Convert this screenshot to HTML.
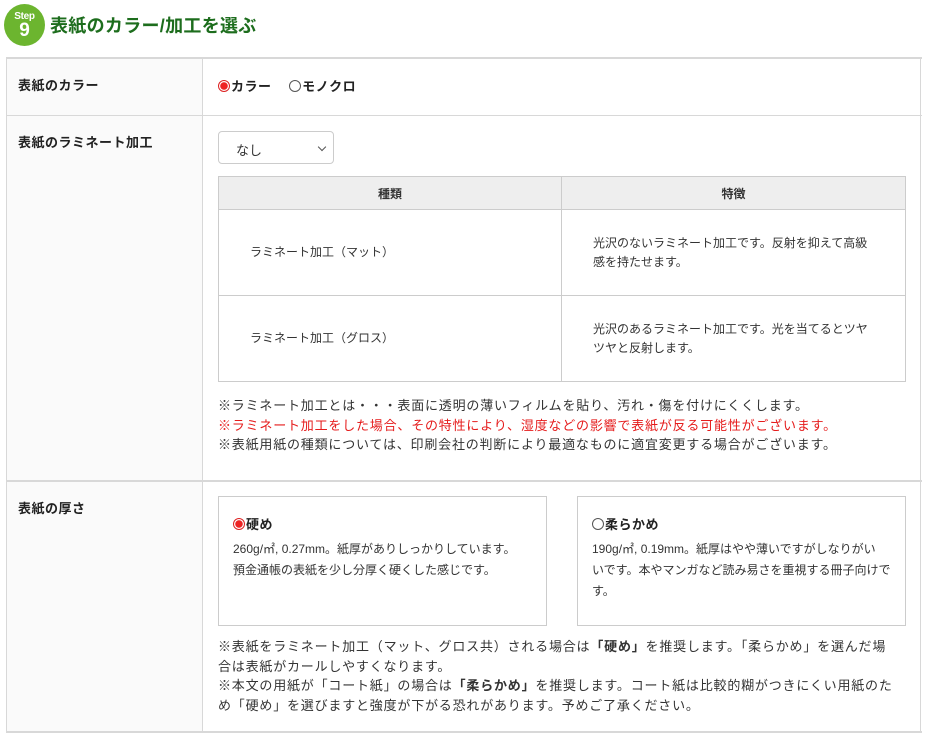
<!DOCTYPE html>
<html><head><meta charset="utf-8">
<style>
*{margin:0;padding:0;box-sizing:border-box}
body{width:926px;height:737px;background:#fff;font-family:"Liberation Sans","Noto Sans CJK JP",sans-serif;color:#333;position:relative;overflow:hidden}
.abs{position:absolute}
.step{left:4px;top:4px;width:41px;height:42px;border-radius:50%;background:#6cb52f;color:#fff;text-align:center}
.step .s{font-size:10px;font-weight:bold;line-height:10px;margin-top:8px;letter-spacing:-.3px}
.step .n{font-size:19px;font-weight:bold;line-height:18px}
h1{position:absolute;left:50px;top:12px;font-size:18px;color:#1d6d1d;font-weight:bold;letter-spacing:.3px}
.line{background:#d8d8d8}
.lab{font-size:13px;font-weight:bold;color:#222;letter-spacing:.5px}
.radio{display:inline-block;width:12px;height:12px;border-radius:50%;border:1px solid #555;vertical-align:-1px;margin-right:1px}
.radio.on{border:1px solid #d22;background:radial-gradient(circle,#e22 0 3.5px,#fff 4px)}
.sel{left:218px;top:131px;width:116px;height:33px;border:1px solid #ccc;border-radius:4px;font-size:13px;padding:8px 0 0 17px}
.sel:after{content:"";position:absolute;right:8px;top:12px;width:5px;height:5px;border-right:1px solid #555;border-bottom:1px solid #555;transform:rotate(45deg)}
table{position:absolute;left:218px;top:176px;width:688px;border-collapse:collapse;font-size:12px;color:#333}
td,th{border:1px solid #ccc}
th{background:#eee;height:33px;font-weight:bold;font-size:12px}
td{height:86px;line-height:19px}
.note{font-size:13px;line-height:19.5px;color:#333;letter-spacing:.8px;white-space:nowrap}
.card{border:1px solid #ccc;height:130px;padding:17px 10px 0 14px}
.card .t{font-size:13px;font-weight:bold;color:#222;margin-bottom:6px;letter-spacing:.5px}
.card .d{font-size:12px;line-height:21px;color:#333;white-space:nowrap}
</style></head><body>
<div class="abs step"><div class="s">Step</div><div class="n">9</div></div>
<h1>表紙のカラー/加工を選ぶ</h1>

<div class="abs" style="left:6px;top:58px;width:197px;height:674px;background:#fafafa"></div>
<div class="abs line" style="left:6px;top:57px;width:916px;height:2px"></div>
<div class="abs line" style="left:6px;top:731px;width:916px;height:2px"></div>
<div class="abs line" style="left:6px;top:57px;width:1px;height:676px"></div>
<div class="abs line" style="left:920px;top:57px;width:1px;height:676px"></div>
<div class="abs line" style="left:202px;top:57px;width:1px;height:676px"></div>
<div class="abs line" style="left:6px;top:115px;width:916px;height:1px"></div>
<div class="abs line" style="left:6px;top:480px;width:916px;height:2px"></div>

<div class="abs lab" style="left:18px;top:75px">表紙のカラー</div>
<div class="abs lab" style="left:218px;top:76px"><span class="radio on"></span>カラー　 <span class="radio"></span>モノクロ</div>

<div class="abs lab" style="left:18px;top:132px">表紙のラミネート加工</div>
<div class="abs sel">なし</div>
<table>
<tr><th style="width:343px">種類</th><th>特徴</th></tr>
<tr><td style="padding-left:31px">ラミネート加工（マット）</td><td style="padding-left:31px;padding-right:34px">光沢のないラミネート加工です。反射を抑えて高級感を持たせます。</td></tr>
<tr><td style="padding-left:31px">ラミネート加工（グロス）</td><td style="padding-left:31px;padding-right:34px">光沢のあるラミネート加工です。光を当てるとツヤツヤと反射します。</td></tr>
</table>
<div class="abs note" style="left:218px;top:396px;width:700px">※ラミネート加工とは・・・表面に透明の薄いフィルムを貼り、汚れ・傷を付けにくくします。<br><span style="color:#e51b1b">※ラミネート加工をした場合、その特性により、湿度などの影響で表紙が反る可能性がございます。</span><br>※表紙用紙の種類については、印刷会社の判断により最適なものに適宜変更する場合がございます。</div>

<div class="abs lab" style="left:18px;top:498px">表紙の厚さ</div>
<div class="abs card" style="left:218px;top:496px;width:329px"><div class="t"><span class="radio on"></span>硬め</div><div class="d">260g/㎡, 0.27mm。紙厚がありしっかりしています。<br>預金通帳の表紙を少し分厚く硬くした感じです。</div></div>
<div class="abs card" style="left:577px;top:496px;width:329px"><div class="t"><span class="radio"></span>柔らかめ</div><div class="d">190g/㎡, 0.19mm。紙厚はやや薄いですがしなりがい<br>いです。本やマンガなど読み易さを重視する冊子向けで<br>す。</div></div>
<div class="abs note" style="left:218px;top:637px;width:700px">※表紙をラミネート加工（マット、グロス共）される場合は<b>「硬め」</b>を推奨します。「柔らかめ」を選んだ場<br>合は表紙がカールしやすくなります。<br>※本文の用紙が「コート紙」の場合は<b>「柔らかめ」</b>を推奨します。コート紙は比較的糊がつきにくい用紙のた<br>め「硬め」を選びますと強度が下がる恐れがあります。予めご了承ください。</div>
</body></html>
